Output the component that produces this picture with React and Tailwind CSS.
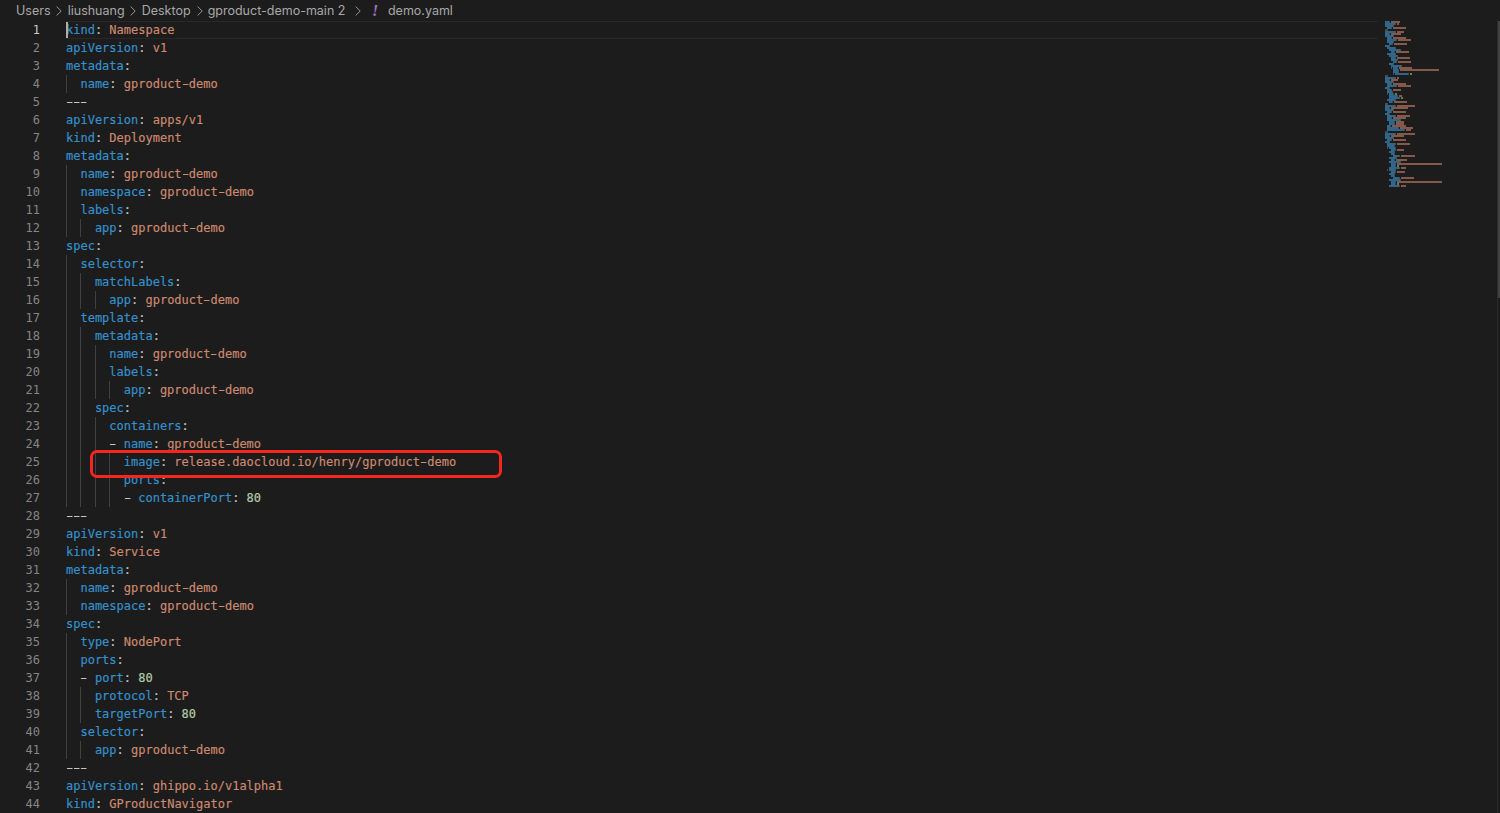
import React from "react";

const source = `kind: Namespace
apiVersion: v1
metadata:
  name: gproduct-demo
---
apiVersion: apps/v1
kind: Deployment
metadata:
  name: gproduct-demo
  namespace: gproduct-demo
  labels:
    app: gproduct-demo
spec:
  selector:
    matchLabels:
      app: gproduct-demo
  template:
    metadata:
      name: gproduct-demo
      labels:
        app: gproduct-demo
    spec:
      containers:
      - name: gproduct-demo
        image: release.daocloud.io/henry/gproduct-demo
        ports:
        - containerPort: 80
---
apiVersion: v1
kind: Service
metadata:
  name: gproduct-demo
  namespace: gproduct-demo
spec:
  type: NodePort
  ports:
  - port: 80
    protocol: TCP
    targetPort: 80
  selector:
    app: gproduct-demo
---
apiVersion: ghippo.io/v1alpha1
kind: GProductNavigator`.split("\n");

const minimapTail = `metadata:
  name: gproduct-demo
spec:
  gproduct: gproduct-demo
  name: gproduct-demo
  localizedName:
    zh-CN: gproduct
    en-US: gproduct
  url: /gproduct-demo
  uiAssetsUrl: /ui/gproduct/
  needImportLicense: false
---
apiVersion: ghippo.io/v1alpha1
kind: GProductProxy
metadata:
  name: gproduct-demo
spec:
  gproduct: gproduct-demo
  proxies:
  - labels:
      kind: UIEntry
    match:
      uri:
        prefix: /gproduct-demo
    rewrite:
      uri: /index.html
    destination:
      host: gproduct-demo.gproduct-demo.svc.cluster.local
      port: 80
    authnCheck: false
  - labels:
      kind: UIAssets
    match:
      uri:
        prefix: /ui/gproduct/
    destination:
      host: gproduct-demo.gproduct-demo.svc.cluster.local
      port: 80
    authnCheck: false`.split("\n");

function parse(line) {
  if (line === "---") return { depth: 0, indent: "", dash: "", key: "", colon: "", value: "", plain: "---" };
  const m = line.match(/^(\s*)(- )?([^:]+)(: ?)?(.*)$/);
  const indent = m[1];
  return {
    depth: indent.length / 2,
    indent,
    dash: m[2] || "",
    key: m[3],
    colon: m[4] || "",
    value: m[5] || "",
    plain: "",
  };
}

// Menlo's hyphen is much longer than DejaVu Mono's; widen each one in place.
function Wide({ text }) {
  return text.split(/(-)/).map((part, i) =>
    part === "-" ? (
      <span key={i} className="inline-block scale-x-[1.7]">-</span>
    ) : (
      part
    )
  );
}

function Code({ line }) {
  const p = parse(line);
  if (p.plain) return <span className="text-[#c4c4c4]"><Wide text={p.plain} /></span>;
  const isNum = /^\d+$/.test(p.value);
  return (
    <>
      {p.dash && <span className="text-[#c4c4c4]"><Wide text={p.dash} /></span>}
      <span className="text-[#3592ce]">{p.key}</span>
      <span className="text-[#c4c4c4]">{p.colon}</span>
      <span className={isNum ? "text-[#b5cea8]" : "text-[#ce8a70]"}><Wide text={p.value} /></span>
    </>
  );
}

function Row({ line, n }) {
  const active = n === 1;
  const { depth } = parse(line);
  return (
    <div className="flex h-[18px]">
      <div className={`w-[40px] shrink-0 text-right ${active ? "text-[#c6c6c6]" : "text-[#858585]"}`}>{n}</div>
      <div className="w-[26px] shrink-0" />
      <div className={`relative flex min-w-0 flex-1 whitespace-pre [-webkit-text-stroke:0.15px] ${active ? "border-y border-[#282828] leading-[16px]" : ""}`}>
        {Array.from({ length: depth }, (_, i) => (
          <span key={i} className="h-[18px] w-[14.448px] shrink-0 border-l border-[#404040]" />
        ))}
        <span><Code line={line} /></span>
        {active && <span className="absolute left-0 top-0 h-[16px] w-[2px] bg-[#aeafad]" />}
      </div>
    </div>
  );
}

function Minimap() {
  const rects = [];
  [...source, ...minimapTail].forEach((line, r) => {
    const p = parse(line);
    const y = r * 2;
    let x = 0;
    const put = (text, fill) => {
      for (const ch of text) {
        if (ch !== " ") rects.push(<rect key={`${r}-${x}`} x={x} y={y} width="1" height="2" fill={fill} />);
        x += 1;
      }
    };
    if (p.plain) return put(p.plain, "#4a4a4a");
    put(p.indent, "#000000");
    put(p.dash, "#4a4a4a");
    put(p.key, "#2f668c");
    put(p.colon, "#4a4a4a");
    put(p.value, /^\d+$/.test(p.value) ? "#4f8a4f" : "#85594a");
  });
  return (
    <svg width="70" height="172" className="ml-[7px] block blur-[0.35px]" shapeRendering="crispEdges">
      {rects}
    </svg>
  );
}

const Sep = ({ className }) => (
  <svg width="6" height="10" viewBox="0 0 6 10" fill="none" className={`shrink-0 text-[#a3a3a3] ${className}`}>
    <path d="M0.6 0.5 L5.2 5 L0.6 9.5" stroke="currentColor" strokeWidth="0.9" />
  </svg>
);

export default function App() {
  return (
    <div className="relative flex h-screen flex-col overflow-hidden bg-[#1c1c1c]">
      <header className="flex h-[21px] shrink-0 items-center whitespace-nowrap pl-4 pt-[1px] font-['Inter',sans-serif] text-[12.5px] text-[#a8a8a8]">
        <span className="w-[36px]">Users</span>
        <Sep className="ml-[4px]" />
        <span className="ml-[5.7px] w-[57px]">liushuang</span>
        <Sep className="ml-[5.3px]" />
        <span className="ml-[5.7px] w-[49.3px]">Desktop</span>
        <Sep className="ml-[6px]" />
        <span className="ml-[4.7px] w-[141.3px]">gproduct-demo-main 2</span>
        <Sep className="ml-[6px]" />
        <span className="ml-[11px] w-[16px] font-['Liberation_Serif',serif] text-[16px] font-bold italic text-[#a074c4]">!</span>
        <span>demo.yaml</span>
      </header>
      <div className="flex min-h-0 flex-1">
        <main className="min-w-0 flex-1 font-['DejaVu_Sans_Mono',monospace] text-[12px] leading-[18px]">
          {source.map((line, i) => (
            <Row key={i} line={line} n={i + 1} />
          ))}
        </main>
        <aside className="w-[119px] shrink-0">
          <Minimap />
        </aside>
        <div className="w-[3px] shrink-0 border-l border-[#2a2a2a]">
          <div className="h-[277px] bg-[#424242]" />
        </div>
      </div>
      <div className="absolute left-[90px] top-[450px] h-[28px] w-[412px] rounded-[7px] border-[3px] border-[#f5261e]" />
    </div>
  );
}
